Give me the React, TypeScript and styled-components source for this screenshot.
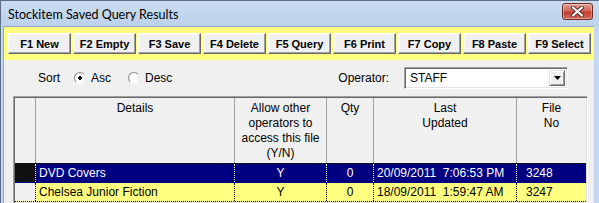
import React from "react";
import styled, { createGlobalStyle } from "styled-components";

const Global = createGlobalStyle`
  html, body { margin: 0; padding: 0; background: #c4d8ef; }
  body { font-family: "Liberation Sans", Arial, sans-serif; }
`;

const Window = styled.div`
  width: 599px;
  height: 203px;
  overflow: hidden;
  display: flex;
  flex-direction: column;
  background: #c4d8ef;
  border-top: 1px solid #5b6e88;
  box-sizing: border-box;
`;

const TitleBar = styled.div`
  height: 25px;
  flex: none;
  display: flex;
  align-items: center;
  justify-content: space-between;
  padding: 0 6px 0 7px;
  background: linear-gradient(#c9dcf1, #bcd2eb);
  border-left: 1px solid #5b6e88;
`;

const Title = styled.span`
  font-family: Lato, "Liberation Sans", Arial, sans-serif;
  font-size: 12.5px;
  color: #000;
  margin-top: 2px;
`;

const CloseButton = styled.div`
  width: 29px;
  height: 15px;
  margin-top: -4px;
  border: 1px solid #6e2b22;
  border-radius: 3px;
  background: linear-gradient(#e3a393 0%, #d0675a 45%, #c1402f 55%, #cf6a5a 100%);
  box-shadow: inset 0 0 0 1px rgba(255, 255, 255, 0.35);
  display: flex;
  align-items: center;
  justify-content: center;
`;

const FrameBody = styled.div`
  flex: 1;
  display: flex;
  padding: 0 5px 0 0;
  border-left: 1px solid #5b6e88;
  background: #c4d8ef;
`;

const Client = styled.div`
  flex: 1;
  margin-left: 2px;
  border-left: 1px solid #8fa7c6;
  border-top: 1px solid #8fa7c6;
  background: #f0f0f0;
  display: flex;
  flex-direction: column;
  min-width: 0;
`;

const Toolbar = styled.div`
  height: 33px;
  flex: none;
  box-sizing: border-box;
  background: #ffff80;
  padding: 6px 0 0 4px;
  display: flex;
  gap: 2px;
  align-items: flex-start;
`;

const FButton = styled.div`
  width: 63px;
  height: 21px;
  box-sizing: border-box;
  background: #f0f0f0;
  border: 1px solid;
  border-color: #ffffff #696969 #696969 #ffffff;
  box-shadow: inset -1px -1px #a0a0a0, inset 1px 1px #f8f8f8;
  display: flex;
  align-items: center;
  justify-content: center;
  font-family: "Liberation Sans", Arial, sans-serif;
  font-weight: bold;
  font-size: 11px;
  color: #000;
  white-space: nowrap;
`;

const SortRow = styled.div`
  height: 36px;
  flex: none;
  box-sizing: border-box;
  display: flex;
  align-items: center;
  padding: 0 0 1px 34px;
  font-family: "Liberation Sans", Arial, sans-serif;
  font-size: 12px;
  color: #000;
`;

const Label = styled.span<{ $gap?: number }>`
  margin-right: ${(p) => p.$gap ?? 0}px;
  white-space: nowrap;
`;

const RadioOption = styled.label<{ $width?: number }>`
  display: flex;
  align-items: center;
  gap: 5px;
  width: ${(p) => (p.$width ? `${p.$width}px` : "auto")};
`;

const RadioCircle = styled.span<{ $checked?: boolean }>`
  width: 12px;
  height: 12px;
  box-sizing: border-box;
  border-radius: 50%;
  border: 1px solid;
  border-color: #8a8a8a #e8e8e8 #ffffff #8a8a8a;
  background: radial-gradient(circle at 50% 50%, ${(p) => (p.$checked ? "#000 0 2px," : "")} #fdfdfd 2px, #f4f4f4 100%);
  display: inline-block;
`;

const Spacer = styled.div`
  flex: 1;
`;

const Combo = styled.div`
  width: 164px;
  height: 22px;
  box-sizing: border-box;
  margin: 0 26px 0 0;
  border: 1px solid;
  border-color: #a0a0a0 #ffffff #ffffff #a0a0a0;
  box-shadow: inset 1px 1px #696969, inset -1px -1px #e3e3e3;
  background: #fff;
  display: flex;
  align-items: center;
  padding: 2px 2px 2px 5px;
`;

const ComboText = styled.span`
  flex: 1;
  font-size: 12px;
`;

const ComboArrow = styled.div`
  width: 16px;
  height: 16px;
  box-sizing: border-box;
  background: #f0f0f0;
  border: 1px solid;
  border-color: #e3e3e3 #696969 #696969 #e3e3e3;
  box-shadow: inset 1px 1px #fff, inset -1px -1px #a0a0a0;
  display: flex;
  align-items: center;
  justify-content: center;
`;

const GridBox = styled.div`
  margin-left: 9px;
  width: 575px;
  flex: 1;
  box-sizing: border-box;
  border: 1px solid;
  border-color: #a0a0a0 #ffffff #ffffff #a0a0a0;
  box-shadow: inset 1px 1px #696969, inset -1px -1px #e3e3e3;
  padding: 1px;
  background: #f0f0f0;
  font-family: "Liberation Sans", Arial, sans-serif;
  font-size: 12px;
  overflow: hidden;
`;

const cols = "20px 199px 92px 47px 143px 1fr";

const HeaderRow = styled.div`
  display: grid;
  grid-template-columns: ${cols};
  height: 65px;
  border-bottom: 1px solid #101010;
`;

const HeaderCell = styled.div`
  border-left: 1px solid #a0a0a0;
  text-align: center;
  padding-top: 3px;
  line-height: 15px;
  color: #000;
  &:first-child { border-left: none; }
`;

const DataRow = styled.div<{ $selected?: boolean }>`
  display: grid;
  grid-template-columns: ${cols};
  height: 19px;
  box-sizing: border-box;
  background: ${(p) => (p.$selected ? "#000080" : "#ffff80")};
  color: ${(p) => (p.$selected ? "#ffffff" : "#000000")};
  border-bottom: 1px dotted #000;
`;

const SelectorCell = styled.div<{ $active?: boolean }>`
  background: ${(p) => (p.$active ? "#101010" : "#f0f0f0")};
`;

const Cell = styled.div<{ $align?: string; $selected?: boolean; $pad?: number }>`
  border-left: 1px dotted ${(p) => (p.$selected ? "#ffffff" : "#000000")};
  text-align: ${(p) => p.$align ?? "left"};
  padding: 0 ${(p) => p.$pad ?? 3}px;
  line-height: 18px;
  white-space: pre;
  overflow: hidden;
`;

const buttons = ["F1 New", "F2 Empty", "F3 Save", "F4 Delete", "F5 Query", "F6 Print", "F7 Copy", "F8 Paste", "F9 Select"];

const rows = [
  { details: "DVD Covers", allow: "Y", qty: "0", updated: "20/09/2011  7:06:53 PM", file: "3248", selected: true },
  { details: "Chelsea Junior Fiction", allow: "Y", qty: "0", updated: "18/09/2011  1:59:47 AM", file: "3247", selected: false },
];

export default function App() {
  return (
    <>
      <Global />
      <Window>
        <TitleBar>
          <Title>Stockitem Saved Query Results</Title>
          <CloseButton>
            <svg width="13" height="11" viewBox="0 0 13 11">
              <path d="M2 1.5 L11 9.5 M11 1.5 L2 9.5" stroke="#5a2a24" strokeWidth="4" strokeLinecap="round" />
              <path d="M2 1.5 L11 9.5 M11 1.5 L2 9.5" stroke="#ffffff" strokeWidth="2.2" strokeLinecap="round" />
            </svg>
          </CloseButton>
        </TitleBar>
        <FrameBody>
          <Client>
            <Toolbar>
              {buttons.map((b) => (
                <FButton key={b}>{b}</FButton>
              ))}
            </Toolbar>
            <SortRow>
              <Label $gap={14}>Sort</Label>
              <RadioOption $width={54}>
                <RadioCircle $checked />
                Asc
              </RadioOption>
              <RadioOption>
                <RadioCircle />
                Desc
              </RadioOption>
              <Spacer />
              <Label $gap={15}>Operator:</Label>
              <Combo>
                <ComboText>STAFF</ComboText>
                <ComboArrow>
                  <svg width="7" height="4" viewBox="0 0 7 4">
                    <path d="M0 0 H7 L3.5 4 Z" fill="#000" />
                  </svg>
                </ComboArrow>
              </Combo>
            </SortRow>
            <GridBox>
              <HeaderRow>
                <HeaderCell />
                <HeaderCell>Details</HeaderCell>
                <HeaderCell>
                  Allow other
                  <br />
                  operators to
                  <br />
                  access this file
                  <br />
                  (Y/N)
                </HeaderCell>
                <HeaderCell>Qty</HeaderCell>
                <HeaderCell>
                  Last
                  <br />
                  Updated
                </HeaderCell>
                <HeaderCell>
                  File
                  <br />
                  No
                </HeaderCell>
              </HeaderRow>
              {rows.map((r) => (
                <DataRow key={r.file} $selected={r.selected}>
                  <SelectorCell $active={r.selected} />
                  <Cell $selected={r.selected}>{r.details}</Cell>
                  <Cell $selected={r.selected} $align="center">{r.allow}</Cell>
                  <Cell $selected={r.selected} $align="center">{r.qty}</Cell>
                  <Cell $selected={r.selected}>{r.updated}</Cell>
                  <Cell $selected={r.selected} $pad={9}>{r.file}</Cell>
                </DataRow>
              ))}
            </GridBox>
          </Client>
        </FrameBody>
      </Window>
    </>
  );
}
